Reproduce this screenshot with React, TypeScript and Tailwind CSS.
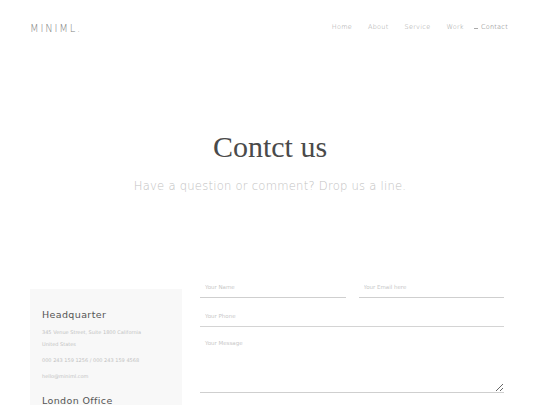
import React from "react";

const navItems = ["Home", "About", "Service", "Work"];

export default function App() {
  return (
    <div className="h-screen bg-white overflow-hidden font-['DejaVu_Sans',sans-serif]">
      {/* Header */}
      <header className="h-[52px] pt-[4px] flex items-center justify-between pl-[30px] pr-[32px]">
        <div className="text-[10px] tracking-[0.18em] text-[#808080] font-extralight">MINIML.</div>
        <nav className="flex items-center gap-[16px] text-[6.5px] text-[#9a9a9a] tracking-[0.04em] font-extralight">
          {navItems.map((item) => (
            <a key={item} href="#">
              {item}
            </a>
          ))}
          <a href="#" className="flex items-center gap-[3px] text-[#666] -ml-[6px]">
            <span className="w-[4px] h-px bg-[#aaa]" />
            Contact
          </a>
        </nav>
      </header>

      {/* Hero */}
      <section className="flex flex-col items-center">
        <h1 className="mt-[77px] text-[30px] leading-[36px] text-[#4a4a4a] font-['Liberation_Serif',serif]">
          Contct us
        </h1>
        <p className="mt-[13px] text-[11.6px] leading-[16px] text-[#c2c2c2] font-extralight tracking-[0.02em]">
          Have a question or comment? Drop us a line.
        </p>
      </section>

      {/* Contact */}
      <section className="mt-[83px] flex items-start gap-[18px] pl-[30px] pr-[36px]">
        <aside className="w-[152px] mt-[12px] bg-[#f8f8f8] pl-[12px] pr-[8px] pt-[20px] pb-[20px]">
          <h3 className="text-[9.5px] leading-[12px] text-[#555] tracking-[0.04em]">Headquarter</h3>
          <p className="mt-[5px] text-[5px] leading-[12px] text-[#c2c2c2]">
            345 Venue Street, Suite 1800 California
            <br />
            United States
          </p>
          <p className="mt-[4px] text-[5px] leading-[12px] text-[#c2c2c2]">000 243 159 1256 / 000 243 159 4568</p>
          <p className="mt-[4px] text-[5px] leading-[12px] text-[#c2c2c2]">hello@miniml.com</p>
          <h3 className="mt-[13px] text-[9.5px] leading-[12px] text-[#555] tracking-[0.04em]">London Office</h3>
        </aside>

        <form className="flex-1 flex flex-col">
          <div className="grid grid-cols-2 gap-[13px]">
            <input
              placeholder="Your Name"
              className="h-[21px] border-b border-[#cfcfcf] px-[5px] text-[5.5px] placeholder:text-[#c8c8c8] outline-none"
            />
            <input
              placeholder="Your Email here"
              className="h-[21px] border-b border-[#cfcfcf] px-[5px] text-[5.5px] placeholder:text-[#c8c8c8] outline-none"
            />
          </div>
          <input
            placeholder="Your Phone"
            className="mt-[8px] h-[21px] border-b border-[#d4d4d4] px-[5px] text-[5.5px] placeholder:text-[#c8c8c8] outline-none"
          />
          <textarea
            placeholder="Your Message"
            className="mt-[7px] h-[59px] border-b border-[#cfcfcf] px-[5px] pt-[5px] text-[5.5px] placeholder:text-[#c8c8c8] outline-none resize-y"
          />
        </form>
      </section>
    </div>
  );
}
